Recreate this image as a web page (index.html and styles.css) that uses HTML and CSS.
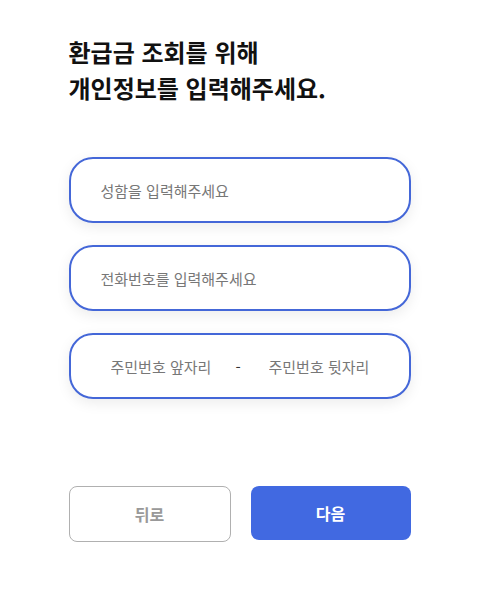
FILE: index.html
```html
<!DOCTYPE html>
<html lang="ko">
<head>
<meta charset="utf-8">
<link rel="stylesheet" href="styles.css">
</head>
<body>
<main class="page">
  <h1 class="title">환급금 조회를 위해<br>개인정보를 입력해주세요.</h1>
  <form class="fields">
    <label class="field"><input class="input" type="text" placeholder="성함을 입력해주세요"></label>
    <label class="field"><input class="input" type="text" placeholder="전화번호를 입력해주세요"></label>
    <div class="field field-split">
      <input class="input input-half" type="text" placeholder="주민번호 앞자리">
      <span class="dash">-</span>
      <input class="input input-half" type="text" placeholder="주민번호 뒷자리">
    </div>
  </form>
  <div class="actions">
    <button class="btn btn-back" type="button">뒤로</button>
    <button class="btn btn-next" type="button">다음</button>
  </div>
</main>
</body>
</html>
```
FILE: styles.css
```css
* { box-sizing: border-box; }
html, body { margin: 0; padding: 0; background: #fff; }
body {
  font-family: "Noto Sans CJK KR", "Noto Sans", sans-serif;
  color: #111;
}
.page {
  width: 342px;
  margin: 0 auto;
  padding-top: 34px;
}
.title {
  margin: 0;
  font-size: 24px;
  font-weight: 700;
  line-height: 36px;
  letter-spacing: 0;
  color: #111;
}
.fields {
  margin-top: 51px;
  display: flex;
  flex-direction: column;
  gap: 22px;
}
.field {
  display: flex;
  align-items: center;
  height: 66px;
  border: 2px solid #4467d8;
  border-radius: 24px;
  background: #fff;
  box-shadow: 0 4px 14px rgba(0, 0, 0, 0.08);
  padding: 0 30px;
}
.input {
  border: none;
  outline: none;
  background: transparent;
  font-family: inherit;
  font-size: 15px;
  color: #333;
  width: 100%;
  padding: 0;
}
.input::placeholder { color: #777; }
.field-split { padding: 0 8px 0 40px; }
.input-half { width: 125px; flex: none; }
.dash {
  font-size: 15px;
  color: #333;
  width: 33px;
  flex: none;
}
.actions {
  margin-top: 87px;
  display: flex;
  gap: 20px;
}
.btn {
  flex: 1;
  height: 56px;
  border-radius: 8px;
  font-family: inherit;
  font-size: 16px;
  font-weight: 700;
  cursor: pointer;
}
.btn-back {
  background: #fff;
  border: 1px solid #b0b0b0;
  color: #999;
}
.btn-next {
  background: #4169e1;
  border: none;
  color: #fff;
  height: 54px;
}
```
